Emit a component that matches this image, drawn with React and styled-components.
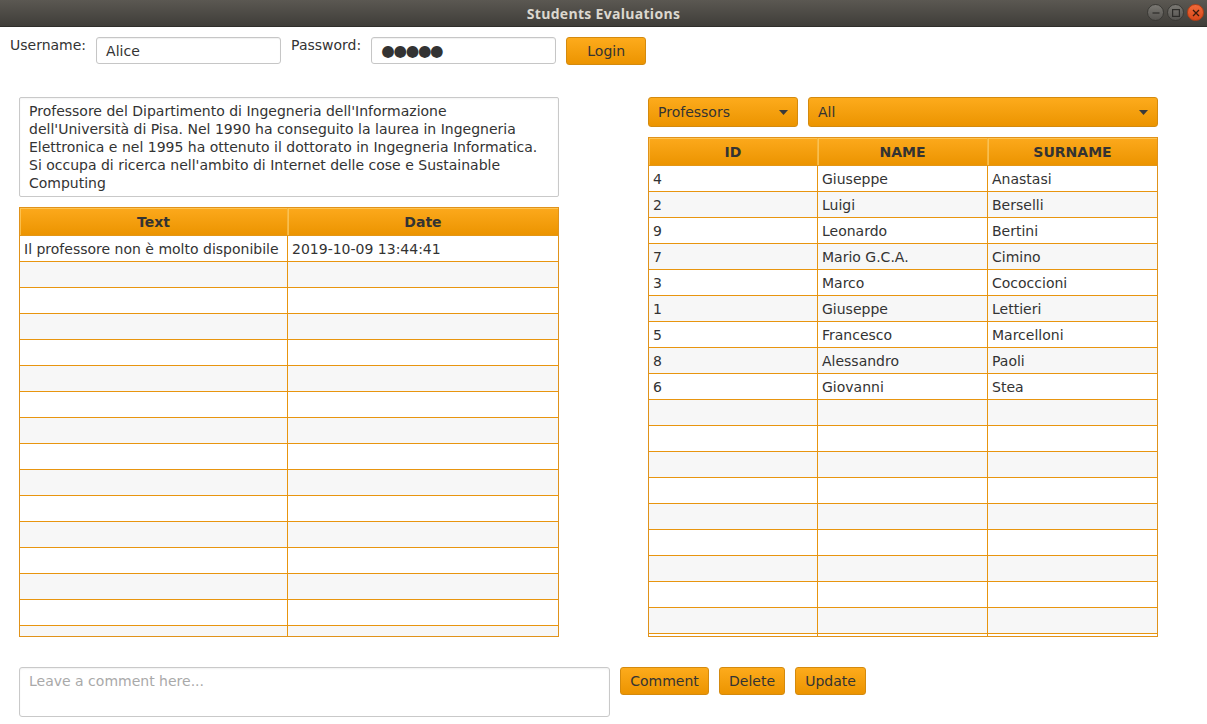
import styled, { createGlobalStyle } from "styled-components";

const GlobalStyle = createGlobalStyle`
  html, body {
    margin: 0;
    padding: 0;
    background: #ffffff;
  }
  body {
    font-family: "DejaVu Sans", "Liberation Sans", sans-serif;
    font-size: 14px;
    color: #333333;
  }
`;

const comments = [["Il professore non è molto disponibile", "2019-10-09 13:44:41"]];

const professors = [
  ["4", "Giuseppe", "Anastasi"],
  ["2", "Luigi", "Berselli"],
  ["9", "Leonardo", "Bertini"],
  ["7", "Mario G.C.A.", "Cimino"],
  ["3", "Marco", "Cococcioni"],
  ["1", "Giuseppe", "Lettieri"],
  ["5", "Francesco", "Marcelloni"],
  ["8", "Alessandro", "Paoli"],
  ["6", "Giovanni", "Stea"],
];

const fillRows = (rows, total, cols) => {
  const out = [...rows];
  while (out.length < total) out.push(Array(cols).fill(""));
  return out;
};

const DataTable = ({ columns, template, rows, total, width, height }) => (
  <TableBox $width={width} $height={height}>
    <HeaderRow $template={template}>
      {columns.map((c) => (
        <HeaderCell key={c}>{c}</HeaderCell>
      ))}
    </HeaderRow>
    {fillRows(rows, total, columns.length).map((r, i) => (
      <Row key={i} $template={template} $odd={i % 2 === 1}>
        {r.map((v, j) => (
          <Cell key={j}>{v}</Cell>
        ))}
      </Row>
    ))}
  </TableBox>
);

const Arrow = () => (
  <svg width="9" height="5" viewBox="0 0 9 5">
    <path d="M0 0 L9 0 L4.5 5 Z" fill="#3a3a3a" />
  </svg>
);

export default function App() {
  return (
    <Window>
      <GlobalStyle />
      <TitleBar>
        <Title>Students Evaluations</Title>
        <WinButtons>
          <WinButton>
            <svg width="8" height="8" viewBox="0 0 8 8">
              <path d="M0.5 4 H7.5" stroke="#2d2c29" strokeWidth="1.2" />
            </svg>
          </WinButton>
          <WinButton>
            <svg width="8" height="8" viewBox="0 0 8 8">
              <rect x="0.6" y="0.6" width="6.8" height="6.8" fill="none" stroke="#2d2c29" strokeWidth="1.2" />
            </svg>
          </WinButton>
          <WinButton $close>
            <svg width="8" height="8" viewBox="0 0 8 8">
              <path d="M1 1 L7 7 M7 1 L1 7" stroke="#3a1a0c" strokeWidth="1.3" />
            </svg>
          </WinButton>
        </WinButtons>
      </TitleBar>

      <TopBar>
        <Label>Username:</Label>
        <Input $width={185}>Alice</Input>
        <Label $gap>Password:</Label>
        <Input $width={185} $dots>●●●●●</Input>
        <Button $width={80}>Login</Button>
      </TopBar>

      <Main>
        <Column>
          <Description>
            Professore del Dipartimento di Ingegneria dell'Informazione dell'Università di Pisa. Nel 1990 ha
            conseguito la laurea in Ingegneria Elettronica e nel 1995 ha ottenuto il dottorato in Ingegneria
            Informatica. Si occupa di ricerca nell'ambito di Internet delle cose e Sustainable Computing
          </Description>
          <DataTable
            columns={["Text", "Date"]}
            template="268px 1fr"
            rows={comments}
            total={16}
            width={540}
            height={430}
          />
        </Column>
        <Column>
          <Filters>
            <Combo $width={150}>
              Professors
              <Arrow />
            </Combo>
            <Combo $grow>
              All
              <Arrow />
            </Combo>
          </Filters>
          <DataTable
            columns={["ID", "NAME", "SURNAME"]}
            template="169px 170px 1fr"
            rows={professors}
            total={19}
            width={510}
            height={500}
          />
        </Column>
      </Main>

      <BottomBar>
        <CommentBox>Leave a comment here...</CommentBox>
        <Button $width={89}>Comment</Button>
        <Button $width={66}>Delete</Button>
        <Button $width={71}>Update</Button>
      </BottomBar>
    </Window>
  );
}

const Window = styled.div`
  width: 1207px;
  height: 724px;
  display: flex;
  flex-direction: column;
  overflow: hidden;
`;

const TitleBar = styled.div`
  height: 26px;
  flex: none;
  position: relative;
  display: flex;
  align-items: center;
  justify-content: center;
  background: linear-gradient(#5b5852, #3f3d39);
  border-bottom: 1px solid #2f2e2b;
`;

const Title = styled.div`
  font-family: "Open Sans", "DejaVu Sans", sans-serif;
  font-weight: 700;
  font-size: 14px;
  color: #dcd8cf;
  letter-spacing: 0.3px;
`;

const WinButtons = styled.div`
  position: absolute;
  right: 3px;
  top: 4px;
  display: flex;
  gap: 3px;
`;

const WinButton = styled.div`
  width: 17px;
  height: 17px;
  border-radius: 50%;
  display: flex;
  align-items: center;
  justify-content: center;
  background: ${(p) =>
    p.$close ? "linear-gradient(#f06a3a, #d9481a)" : "linear-gradient(#7a7873, #55534f)"};
  border: 1px solid ${(p) => (p.$close ? "#b63d14" : "#3a3935")};
  box-sizing: border-box;
`;

const TopBar = styled.div`
  display: flex;
  align-items: flex-start;
  padding: 10px 0 0 10px;
  height: 27px;
`;

const Label = styled.div`
  margin-left: ${(p) => (p.$gap ? "10px" : "0")};
  margin-right: 10px;
  line-height: 17px;
`;

const Input = styled.div`
  width: ${(p) => p.$width}px;
  height: 27px;
  box-sizing: border-box;
  border: 1px solid #c6c6c6;
  border-radius: 3px;
  background: #ffffff;
  box-shadow: inset 0 1px 1px rgba(0, 0, 0, 0.06);
  padding: 0 9px;
  display: flex;
  align-items: center;
  font-size: ${(p) => (p.$dots ? "15.5px" : "14px")};
  letter-spacing: ${(p) => (p.$dots ? "-1.3px" : "0")};
  color: #333333;
`;

const Button = styled.div`
  width: ${(p) => p.$width}px;
  height: 28px;
  margin-left: 10px;
  box-sizing: border-box;
  border: 1px solid #d48a0e;
  border-radius: 3px;
  background: linear-gradient(#fdab1c, #ec9400);
  display: flex;
  align-items: center;
  justify-content: center;
  color: #333333;
  font-size: 14px;
`;

const Main = styled.div`
  display: flex;
  gap: 89px;
  padding: 33px 0 0 19px;
`;

const Column = styled.div`
  display: flex;
  flex-direction: column;
  gap: 10px;
`;

const Description = styled.div`
  width: 540px;
  height: 100px;
  box-sizing: border-box;
  border: 1px solid #c9c9c9;
  border-radius: 2px;
  box-shadow: inset 0 1px 2px rgba(0, 0, 0, 0.05);
  padding: 4px 12px 0 9px;
  line-height: 18px;
  color: #333333;
`;

const Filters = styled.div`
  display: flex;
  gap: 10px;
  width: 510px;
`;

const Combo = styled.div`
  height: 30px;
  box-sizing: border-box;
  ${(p) => (p.$grow ? "flex: 1;" : `width: ${p.$width}px;`)}
  border: 1px solid #d48a0e;
  border-radius: 3px;
  background: linear-gradient(#fdab1c, #ec9400);
  display: flex;
  align-items: center;
  justify-content: space-between;
  padding: 0 9px;
  color: #333333;
`;

const TableBox = styled.div`
  width: ${(p) => p.$width}px;
  height: ${(p) => p.$height}px;
  box-sizing: border-box;
  border: 1px solid #e0921a;
  overflow: hidden;
`;

const HeaderRow = styled.div`
  display: grid;
  grid-template-columns: ${(p) => p.$template};
  height: 28px;
  background: linear-gradient(#fca91c, #ec9400);
  border-bottom: 1px solid #e39616;
  box-sizing: border-box;
`;

const HeaderCell = styled.div`
  display: flex;
  align-items: center;
  justify-content: center;
  font-weight: 700;
  color: #333333;
  border-right: 1px solid #f5b640;
  box-shadow: inset 1px 1px 0 rgba(255, 214, 120, 0.6);
  &:last-child {
    border-right: none;
  }
`;

const Row = styled.div`
  display: grid;
  grid-template-columns: ${(p) => p.$template};
  height: 26px;
  box-sizing: border-box;
  border-bottom: 1px solid #e8950f;
  background: ${(p) => (p.$odd ? "#f7f7f7" : "#ffffff")};
`;

const Cell = styled.div`
  display: flex;
  align-items: center;
  padding-left: 4px;
  border-right: 1px solid #e8950f;
  white-space: nowrap;
  overflow: hidden;
  color: #333333;
  &:last-child {
    border-right: none;
  }
`;

const BottomBar = styled.div`
  display: flex;
  align-items: flex-start;
  padding: 30px 0 0 19px;
  & > div:nth-child(2) {
    margin-left: 10px;
  }
`;

const CommentBox = styled.div`
  width: 591px;
  height: 50px;
  box-sizing: border-box;
  border: 1px solid #c9c9c9;
  border-radius: 3px;
  box-shadow: inset 0 1px 2px rgba(0, 0, 0, 0.06);
  padding: 5px 9px;
  color: #a9a9a9;
`;
